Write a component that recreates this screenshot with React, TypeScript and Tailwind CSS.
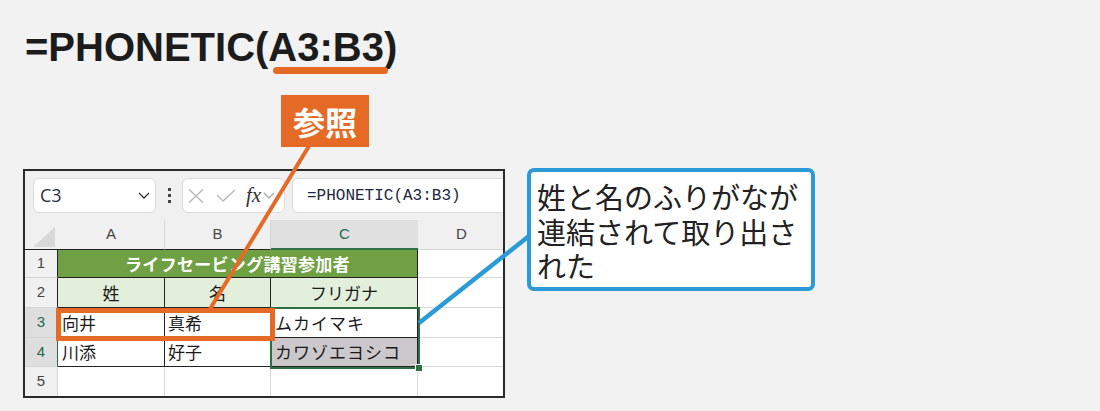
import React from "react";

const jp = "font-['Noto_Sans_CJK_JP',sans-serif]";

const Chevron: React.FC<{ className?: string }> = ({ className }) => (
  <svg width="12" height="7" viewBox="0 0 12 7" className={className}>
    <polyline points="1,1 6,6 11,1" fill="none" stroke="currentColor" strokeWidth="1.3" />
  </svg>
);

const FormulaBar: React.FC = () => (
  <div className="h-[49px] flex items-center pl-[8px] shrink-0">
    <div className="w-[123px] h-[35px] shrink-0 bg-white rounded-[6px] border border-[#dadada] flex items-center pl-[6px] pr-[5px] justify-between">
      <span className="text-[18px] text-[#2a2f3a] font-['Open_Sans',sans-serif]">C3</span>
      <Chevron className="text-[#333]" />
    </div>
    <div className="w-[26px] shrink-0 flex flex-col items-center gap-[3px]">
      <div className="w-[3px] h-[3px] bg-[#444]" />
      <div className="w-[3px] h-[3px] bg-[#444]" />
      <div className="w-[3px] h-[3px] bg-[#444]" />
    </div>
    <div className="w-[103px] h-[35px] shrink-0 bg-white rounded-[6px] border border-[#dadada] flex items-center pl-[5px] gap-[12px] overflow-hidden">
      <svg width="16" height="14" viewBox="0 0 16 14">
        <path d="M1 0.5 L15 13.5 M15 0.5 L1 13.5" stroke="#b9b9b9" strokeWidth="1.4" fill="none" />
      </svg>
      <svg width="20" height="13" viewBox="0 0 20 13">
        <polyline points="1,6 7,12 19,1" stroke="#b9b9b9" strokeWidth="1.4" fill="none" />
      </svg>
      <span className="font-['Liberation_Serif',serif] italic text-[21px] text-[#333] leading-none -ml-[2px]">fx</span>
      <Chevron className="text-[#aaa] -ml-[10px]" />
    </div>
    <div className="ml-[7px] w-[240px] h-[35px] shrink-0 bg-white rounded-[6px] border border-[#dadada] flex items-center pl-[14px]">
      <span className="font-['Liberation_Mono',monospace] text-[16px] text-[#1d2740]">=PHONETIC(A3:B3)</span>
    </div>
  </div>
);

const cols = { head: "w-[33px]", a: "w-[107px]", b: "w-[106px]", c: "w-[147px]" };

const RowHead: React.FC<{ n: number; active?: boolean; table?: boolean; h: string }> = ({ n, active, table, h }) => (
  <div
    className={`${cols.head} ${h} shrink-0 flex items-center justify-center text-[15px] font-['Liberation_Sans',sans-serif] border-b border-[#d4d4d4] border-r
      ${active ? "bg-[#dedede] text-[#1f6a4f]" : "bg-[#f0f0f0] text-[#444]"}
      ${table ? (active ? "border-r-[#2f6f44]" : "border-r-[#222]") : "border-r-[#d4d4d4]"}`}
  >
    {n}
  </div>
);

const Cell: React.FC<{ w: string; children?: React.ReactNode; className?: string }> = ({ w, children, className }) => (
  <div className={`${w} shrink-0 flex items-center ${jp} text-[17px] text-[#1a1a1a] border-r border-b ${className ?? ""}`}>
    {children}
  </div>
);

const Sheet: React.FC = () => (
  <div className="ml-[23px] mt-[1px] w-[482px] h-[229px] shrink-0 border-2 border-[#2a2a2a] bg-[#f0f0f0] overflow-hidden flex flex-col">
    <FormulaBar />
    {/* column headers */}
    <div className="h-[30px] flex shrink-0">
      <div className={`${cols.head} shrink-0 relative border-b border-[#222]`}>
        <svg width="22" height="20" viewBox="0 0 22 20" className="absolute left-[8px] top-[7px]">
          <polygon points="0,20 22,0 22,20" fill="#d8d8d8" />
        </svg>
      </div>
      <div className={`${cols.a} shrink-0 flex items-center justify-center text-[15px] text-[#444] font-['Liberation_Sans',sans-serif] border-r border-r-[#d8d8d8] border-b border-b-[#222]`}>A</div>
      <div className={`${cols.b} shrink-0 flex items-center justify-center text-[15px] text-[#444] font-['Liberation_Sans',sans-serif] border-r border-r-[#d8d8d8] border-b border-b-[#222]`}>B</div>
      <div className={`${cols.c} shrink-0 flex items-center justify-center text-[15px] text-[#1f6a4f] font-['Liberation_Sans',sans-serif] bg-[#e0e0e0] border-b-2 border-[#2f6f44]`}>C</div>
      <div className="flex-1 flex items-center justify-center text-[15px] text-[#444] font-['Liberation_Sans',sans-serif] border-b border-[#d4d4d4] pl-[2px]">D</div>
    </div>
    {/* body */}
    <div className="relative flex flex-col bg-white">
      <div className="flex h-[28px]">
        <RowHead n={1} table h="h-[28px]" />
        <div className={`w-[360px] shrink-0 flex items-center justify-center bg-[#70a044] border-r border-b border-[#222] text-white font-bold text-[17px] tracking-[0.3px] ${jp}`}>
          ライフセービング講習参加者
        </div>
        <div className="flex-1 border-b border-[#d9d9d9]" />
      </div>
      <div className="flex h-[30px]">
        <RowHead n={2} table h="h-[30px]" />
        <Cell w={cols.a} className="justify-center bg-[#e2efda] border-[#222]">姓</Cell>
        <Cell w={cols.b} className="justify-center bg-[#e2efda] border-[#222]">名</Cell>
        <Cell w={cols.c} className="justify-center bg-[#e2efda] border-[#222]">フリガナ</Cell>
        <div className="flex-1 border-b border-[#d9d9d9]" />
      </div>
      <div className="flex h-[30px]">
        <RowHead n={3} active table h="h-[30px]" />
        <Cell w={cols.a} className="pl-[4px] border-[#222]">向井</Cell>
        <Cell w={cols.b} className="pl-[3px] border-[#222]">真希</Cell>
        <Cell w={cols.c} className="pl-[4px] border-[#222] tracking-[1px]">ムカイマキ</Cell>
        <div className="flex-1 border-b border-[#d9d9d9]" />
      </div>
      <div className="flex h-[29px]">
        <RowHead n={4} active table h="h-[29px]" />
        <Cell w={cols.a} className="pl-[4px] border-[#222]">川添</Cell>
        <Cell w={cols.b} className="pl-[3px] border-[#222]">好子</Cell>
        <Cell w={cols.c} className="pl-[4px] border-[#222] bg-[#cac8cb] tracking-[1px]">カワゾエヨシコ</Cell>
        <div className="flex-1 border-b border-[#d9d9d9]" />
      </div>
      <div className="flex h-[30px]">
        <RowHead n={5} h="h-[30px]" />
        <Cell w={cols.a} className="border-[#d9d9d9]" />
        <Cell w={cols.b} className="border-[#d9d9d9]" />
        <Cell w={cols.c} className="border-[#d9d9d9]" />
        <div className="flex-1 border-b border-[#d9d9d9]" />
      </div>
      {/* selection C3:C4 */}
      <div className="absolute left-[245px] top-[57px] w-[150px] h-[62px] border-2 border-[#2f6f44]" />
      <div className="absolute left-[391px] top-[115px] w-[6px] h-[6px] bg-[#2f6f44] outline outline-1 outline-white" />
    </div>
  </div>
);

export default function App() {
  return (
    <div className="relative w-[1100px] h-[411px] bg-[#f2f2f2] overflow-hidden font-['Liberation_Sans',sans-serif]">
      <h1 className="pl-[25px] pt-[23px] text-[40px] leading-[48px] font-bold text-[#1c1c1c]">
        =PHONETIC(A3:B3)
      </h1>
      <div className={`ml-[281px] mt-[24px] w-[88px] h-[52px] flex items-center justify-center bg-[#e56a26] text-white font-bold text-[32px] leading-none ${jp}`}>
        参照
      </div>
      <div className="mt-[21px] flex items-start">
        <Sheet />
        <div className={`ml-[22px] w-[288px] h-[123px] shrink-0 bg-white border-4 border-[#2b9ad7] rounded-[7px] pl-[6px] pt-[7px] text-[29px] leading-[34.5px] text-[#222] ${jp}`}>
          姓と名のふりがなが
          <br />
          連結されて取り出さ
          <br />
          れた
        </div>
      </div>

      {/* annotations */}
      <div className="absolute left-[273px] top-[67px] w-[115px] h-[7px] rounded-full bg-[#e56a26]" />
      <div className="absolute left-[56px] top-[308px] w-[219px] h-[33px] border-[5px] border-[#e56a26]" />
      <svg className="absolute left-0 top-0 pointer-events-none" width="1100" height="411">
        <line x1="309" y1="146" x2="210" y2="309" stroke="#e56a26" strokeWidth="4" />
        <line x1="529" y1="236" x2="419" y2="323" stroke="#2b9ad7" strokeWidth="4.5" />
      </svg>
    </div>
  );
}
